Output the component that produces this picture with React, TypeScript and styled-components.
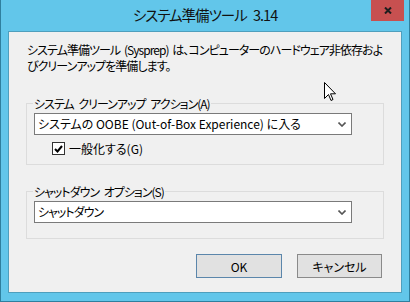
import React from "react";
import styled, { createGlobalStyle } from "styled-components";

const Global = createGlobalStyle`
  html, body { margin: 0; padding: 0; background: #62c6ea; }
  body { font-family: "Noto Sans CJK JP", "Noto Sans", sans-serif; }
  * { box-sizing: border-box; }
`;

const UI_FONT = `"Noto Sans CJK JP", "Noto Sans", sans-serif`;

const Window = styled.div`
  position: relative;
  width: 410px;
  height: 302px;
  background: #62c6ea;
  border: 1px solid #2f7f9e;
  border-top: none;
  display: flex;
  flex-direction: column;
  font-family: ${UI_FONT};
  font-feature-settings: "palt" 1;
  color: #000;
`;

const TitleBar = styled.div`
  height: 31px;
  display: grid;
  grid-template-columns: 1fr auto 1fr;
  align-items: start;
`;

const Title = styled.div`
  grid-column: 2;
  font-size: 14.5px;
  letter-spacing: -1px;
  word-spacing: 4px;
  line-height: 30px;
  color: #111;
  white-space: nowrap;
`;

const CloseButton = styled.div`
  grid-column: 3;
  justify-self: end;
  margin-right: 5px;
  width: 33px;
  height: 21px;
  background: #c75050;
  display: flex;
  align-items: center;
  justify-content: center;
`;

const Client = styled.div`
  flex: 1;
  margin: 0 7px 8px;
  background: #f0f0f0;
  border: 1px solid #4f9fbd;
  padding: 0 17px;
  display: flex;
  flex-direction: column;
  font-size: 12px;
`;

const Description = styled.p`
  margin: 10px 0 0;
  padding-left: 1px;
  line-height: 16px;
  font-size: 12px;
  letter-spacing: -0.95px;
  word-spacing: 2px;
  white-space: nowrap;
  color: #000;
`;

const Group = styled.fieldset<{ $top: number; $bottom: number }>`
  margin: ${(p) => p.$top}px 0 0;
  padding: 2px 31px ${(p) => p.$bottom}px 7px;
  border: 1px solid #dcdcdc;
  border-radius: 0;
  display: flex;
  flex-direction: column;
  min-width: 0;
`;

const Legend = styled.legend`
  margin-left: -1px;
  padding: 0 1px;
  font-size: 12px;
  line-height: 15px;
  letter-spacing: -1px;
  word-spacing: 3px;
  color: #000;
`;

const Select = styled.div`
  height: 22px;
  background: #fff;
  border: 1px solid #7a7a7a;
  display: flex;
  align-items: center;
  padding: 0 5px 0 3px;
  font-size: 12px;
  line-height: 20px;
`;

const SelectText = styled.span<{ $spacing?: number }>`
  flex: 1;
  white-space: nowrap;
  letter-spacing: ${(p) => p.$spacing ?? 0}px;
`;

const CheckRow = styled.label`
  margin: 7px 0 0 18px;
  display: flex;
  align-items: center;
  gap: 4px;
  font-size: 12px;
  line-height: 13px;
`;

const CheckBox = styled.span`
  width: 13px;
  height: 13px;
  background: #fff;
  border: 1px solid #333;
  display: flex;
  align-items: center;
  justify-content: center;
`;

const ButtonRow = styled.div`
  margin: 15px 2px 0 0;
  display: flex;
  justify-content: flex-end;
  gap: 15px;
`;

const Button = styled.div<{ $default?: boolean }>`
  width: ${(p) => (p.$default ? 86 : 85)}px;
  height: 24px;
  background: #e1e1e1;
  border: 1px solid ${(p) => (p.$default ? "#5b86ab" : "#8a8a8a")};
  display: flex;
  align-items: center;
  justify-content: center;
  font-size: 12px;
  color: #000;
`;

const Cursor = styled.svg`
  position: absolute;
  left: 323px;
  top: 82px;
`;

const Chevron = () => (
  <svg width="8" height="5" viewBox="0 0 8 5">
    <path d="M0.5 0.5 L4 4 L7.5 0.5" fill="none" stroke="#555" strokeWidth="1.6" />
  </svg>
);

export default function App() {
  return (
    <>
      <Global />
      <Window>
        <TitleBar>
          <Title>システム準備ツール 3.14</Title>
          <CloseButton>
            <svg width="8" height="7" viewBox="0 0 8 7">
              <path d="M1 0.5 L7 6.5 M7 0.5 L1 6.5" stroke="#1e1e1e" strokeWidth="2" />
            </svg>
          </CloseButton>
        </TitleBar>
        <Client>
          <Description>
            システム準備ツール (Sysprep) は、コンピューターのハードウェア非依存およ
            <br />
            びクリーンアップを準備します。
          </Description>
          <Group $top={22} $bottom={9}>
            <Legend>システム クリーンアップ アクション(A)</Legend>
            <Select>
              <SelectText>システムの OOBE (Out-of-Box Experience) に入る</SelectText>
              <Chevron />
            </Select>
            <CheckRow>
              <CheckBox>
                <svg width="9" height="8" viewBox="0 0 9 8">
                  <path d="M1 4 L3.5 6.5 L8 1" fill="none" stroke="#000" strokeWidth="2" />
                </svg>
              </CheckBox>
              一般化する(G)
            </CheckRow>
          </Group>
          <Group $top={19} $bottom={15}>
            <Legend>シャットダウン オプション(S)</Legend>
            <Select>
              <SelectText $spacing={-1}>シャットダウン</SelectText>
              <Chevron />
            </Select>
          </Group>
          <ButtonRow>
            <Button $default>OK</Button>
            <Button>キャンセル</Button>
          </ButtonRow>
        </Client>
        <Cursor width="13" height="21" viewBox="0 0 13 21">
          <path
            d="M0.5 0.5 L0.5 16.5 L4.5 12.5 L7 18.5 L9 17.5 L6.5 11.8 L11.5 11.8 Z"
            fill="#fff"
            stroke="#000"
            strokeWidth="1"
            strokeLinejoin="miter"
          />
        </Cursor>
      </Window>
    </>
  );
}
